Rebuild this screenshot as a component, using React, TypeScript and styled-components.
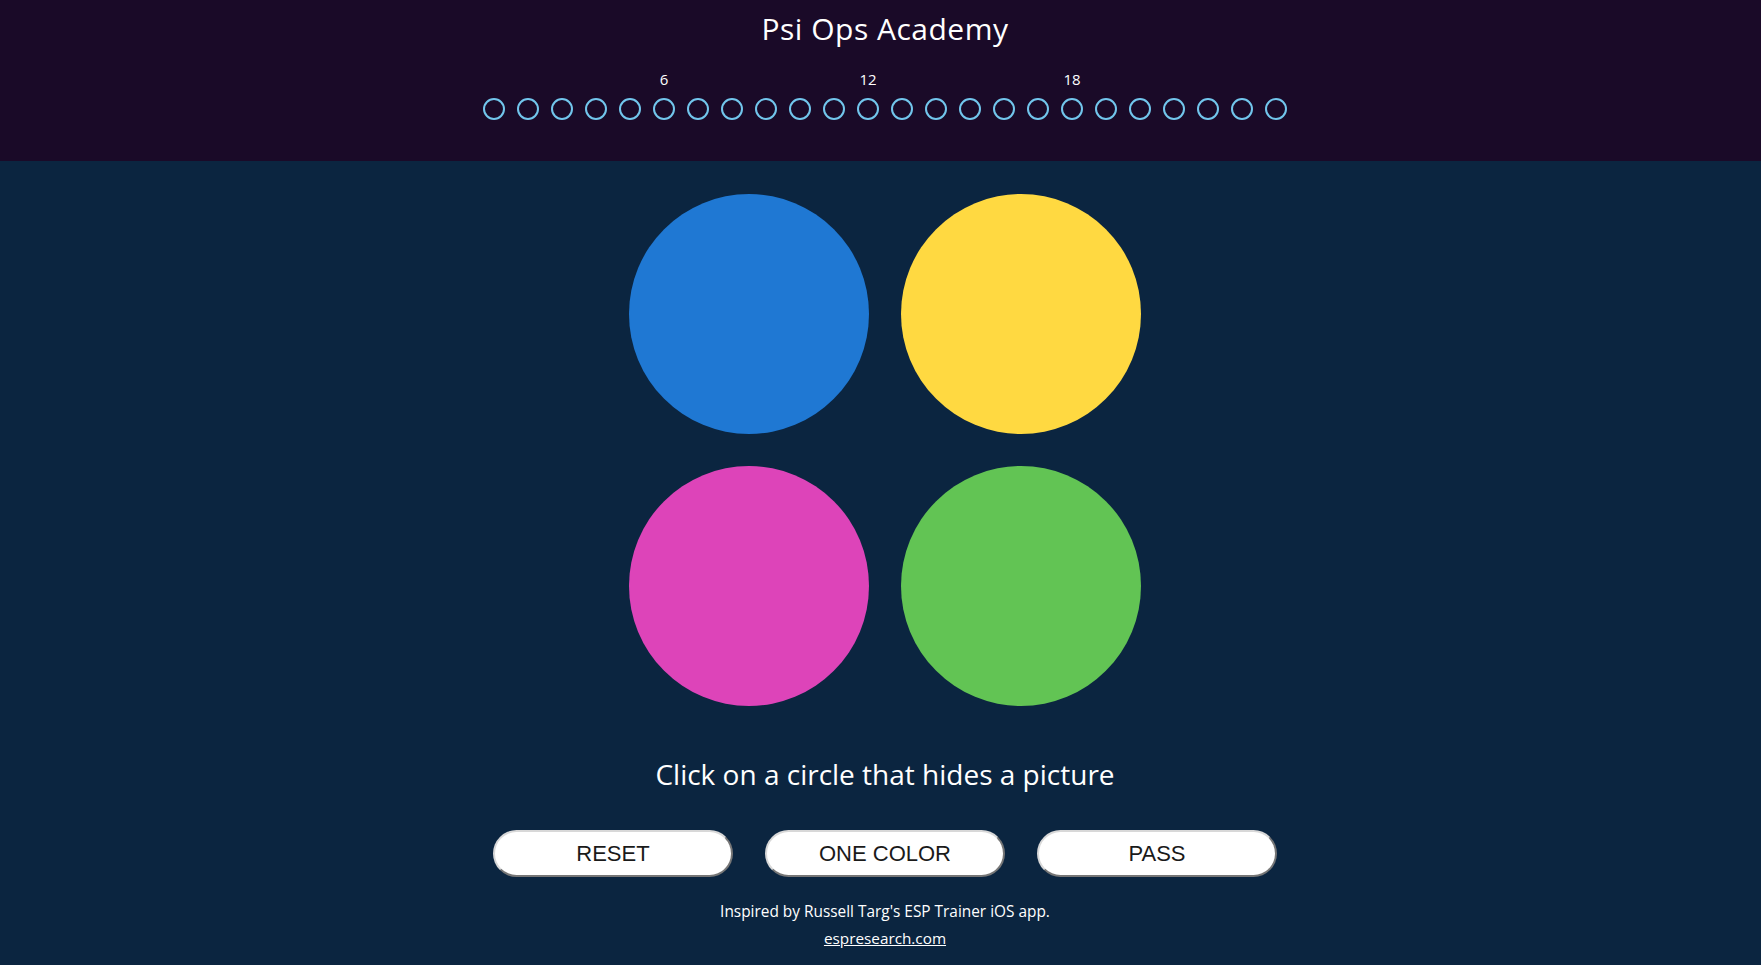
import React from "react";
import styled, { createGlobalStyle } from "styled-components";

const GlobalStyle = createGlobalStyle`
  html, body {
    margin: 0;
    padding: 0;
    background: #0b2540;
    overflow: hidden;
  }
  body {
    font-family: "Open Sans", "Noto Sans", sans-serif;
    color: #ffffff;
  }
`;

const TRIALS = 24;
const COLORS = ["#1f78d3", "#ffd941", "#dd44b9", "#62c454"];

const Page = styled.div`
  height: 100vh;
  display: flex;
  flex-direction: column;
`;

const Header = styled.header`
  background: #1a0a28;
  height: 161px;
  flex-shrink: 0;
  box-sizing: border-box;
  padding: 10px 0 0 9px;
  display: flex;
  flex-direction: column;
  align-items: center;
`;

const Title = styled.h1`
  margin: 0;
  font-size: 30px;
  font-weight: 400;
  line-height: 38px;
  letter-spacing: 0.5px;
`;

const Tracker = styled.div`
  margin-top: 23px;
  display: flex;
  gap: 12px;
`;

const Slot = styled.div`
  display: flex;
  flex-direction: column;
  align-items: center;
  width: 22px;
`;

const SlotLabel = styled.span`
  height: 17px;
  font-size: 15px;
  line-height: 17px;
  margin-bottom: 10px;
`;

const Dot = styled.span`
  width: 22px;
  height: 22px;
  box-sizing: border-box;
  border: 2px solid #72c6ec;
  border-radius: 50%;
`;

const Main = styled.main`
  flex: 1;
  display: flex;
  flex-direction: column;
  align-items: center;
  padding: 33px 0 0 9px;
`;

const Grid = styled.div`
  display: grid;
  grid-template-columns: repeat(2, 240px);
  gap: 32px;
`;

const Circle = styled.button<{ $color: string }>`
  width: 240px;
  height: 240px;
  border: none;
  padding: 0;
  border-radius: 50%;
  background: ${(p) => p.$color};
  cursor: pointer;
`;

const Prompt = styled.p`
  margin: 50px 0 0;
  font-size: 28px;
  line-height: 36px;
`;

const Buttons = styled.div`
  margin-top: 38px;
  display: flex;
  gap: 32px;
`;

const ActionButton = styled.button`
  width: 240px;
  height: 47px;
  border-radius: 24px;
  background: #ffffff;
  border: 2px solid;
  border-color: #d8d8d8 #767676 #767676 #d8d8d8;
  font-family: "Liberation Sans", Arial, sans-serif;
  font-size: 22px;
  color: #1a1a1a;
  cursor: pointer;
`;

const Footer = styled.footer`
  margin-top: 22px;
  display: flex;
  flex-direction: column;
  align-items: center;
  font-size: 15.4px;
  line-height: 26px;
`;

const FooterLink = styled.a`
  color: #ffffff;
  font-size: 15.3px;
  text-decoration: underline;
`;

export default function App() {
  return (
    <Page>
      <GlobalStyle />
      <Header>
        <Title>Psi Ops Academy</Title>
        <Tracker>
          {Array.from({ length: TRIALS }, (_, i) => (
            <Slot key={i}>
              <SlotLabel>{(i + 1) % 6 === 0 && i + 1 < TRIALS ? i + 1 : ""}</SlotLabel>
              <Dot />
            </Slot>
          ))}
        </Tracker>
      </Header>
      <Main>
        <Grid>
          {COLORS.map((c) => (
            <Circle key={c} $color={c} aria-label="circle" />
          ))}
        </Grid>
        <Prompt>Click on a circle that hides a picture</Prompt>
        <Buttons>
          <ActionButton>RESET</ActionButton>
          <ActionButton>ONE COLOR</ActionButton>
          <ActionButton>PASS</ActionButton>
        </Buttons>
        <Footer>
          <span>Inspired by Russell Targ's ESP Trainer iOS app.</span>
          <FooterLink href="#">espresearch.com</FooterLink>
        </Footer>
      </Main>
    </Page>
  );
}
